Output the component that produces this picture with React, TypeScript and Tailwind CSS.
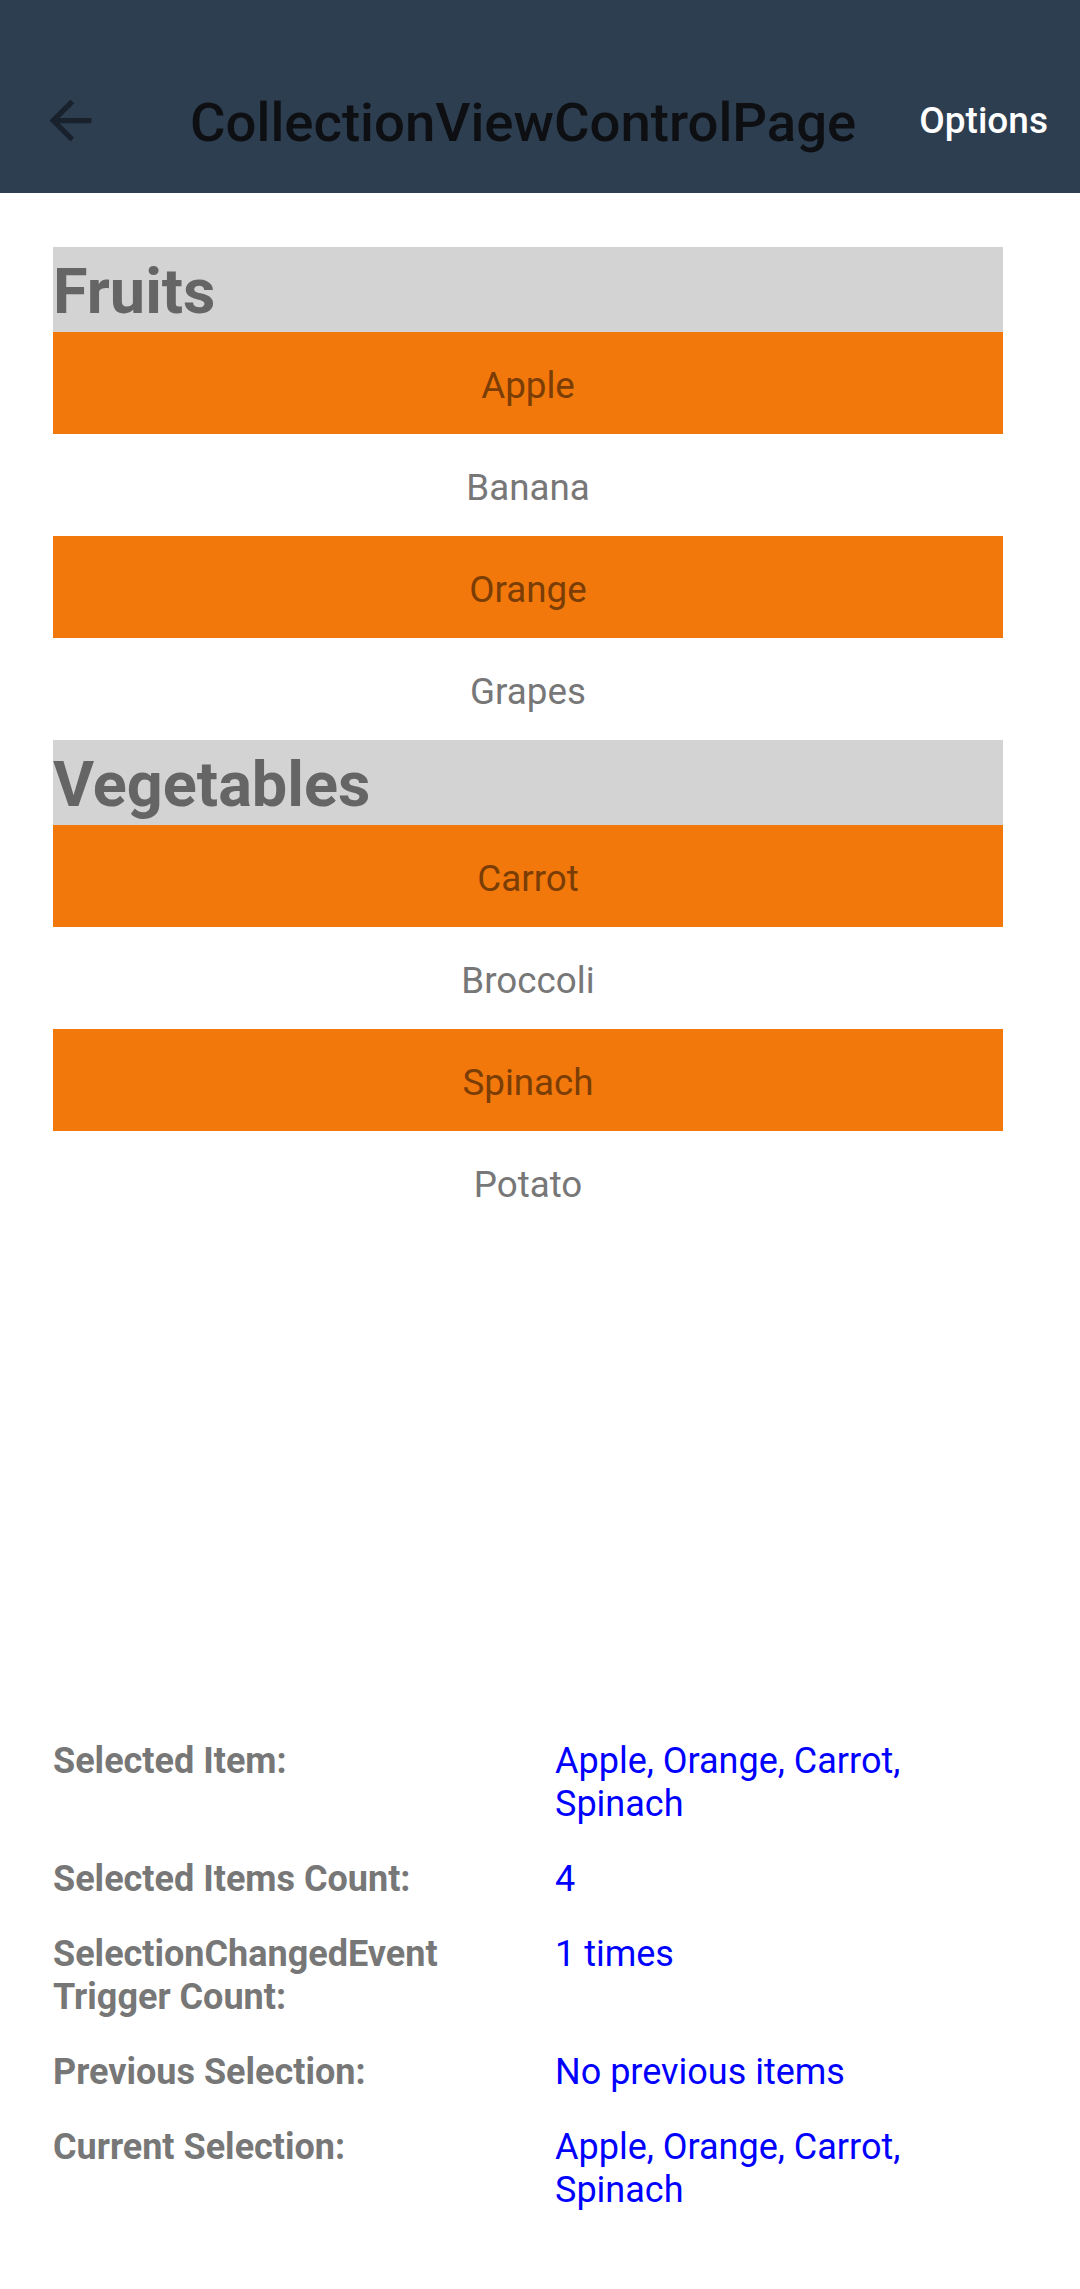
import React from "react";

type Item = { name: string; selected: boolean };
type Group = { title: string; items: Item[] };

const groups: Group[] = [
  {
    title: "Fruits",
    items: [
      { name: "Apple", selected: true },
      { name: "Banana", selected: false },
      { name: "Orange", selected: true },
      { name: "Grapes", selected: false },
    ],
  },
  {
    title: "Vegetables",
    items: [
      { name: "Carrot", selected: true },
      { name: "Broccoli", selected: false },
      { name: "Spinach", selected: true },
      { name: "Potato", selected: false },
    ],
  },
];

const details: { label: string; value: string }[] = [
  { label: "Selected Item:", value: "Apple, Orange, Carrot, Spinach" },
  { label: "Selected Items Count:", value: "4" },
  { label: "SelectionChangedEvent Trigger Count:", value: "1 times" },
  { label: "Previous Selection:", value: "No previous items" },
  { label: "Current Selection:", value: "Apple, Orange, Carrot, Spinach" },
];

export default function App() {
  return (
    <div className="w-[1080px] min-h-[2289px] bg-white font-['Roboto',sans-serif]">
      {/* Toolbar */}
      <header className="h-[193px] bg-[#2d3e50] pt-[47px] flex items-center">
        <button className="ml-[39px] w-[63px] h-[63px] flex items-center justify-center">
          <svg width="63" height="63" viewBox="0 0 24 24" fill="#19212c">
            <path d="M20 11H7.83l5.59-5.59L12 4l-8 8 8 8 1.41-1.41L7.83 13H20v-2z" />
          </svg>
        </button>
        <h1 className="ml-[88px] mt-[4px] text-[54.5px] leading-none font-medium text-[#0d0f12]">
          CollectionViewControlPage
        </h1>
        <span className="ml-auto mr-[32px] mt-[2px] text-[37px] font-medium text-white">
          Options
        </span>
      </header>

      {/* Grouped collection */}
      <div className="pt-[54px] pl-[53px]">
        <div className="w-[950px]">
          {groups.map((group) => (
            <div key={group.title}>
              <div className="h-[85px] bg-[#d3d3d3] pt-[8px]">
                <span className="text-[63px] leading-[74px] font-bold text-[#656565]">
                  {group.title}
                </span>
              </div>
              {group.items.map((item) => (
                <div
                  key={item.name}
                  className={
                    item.selected
                      ? "h-[102px] pt-[5px] bg-[#f2780c] flex items-center justify-center text-[36.75px] text-[#7a3d06]"
                      : "h-[102px] pt-[5px] bg-white flex items-center justify-center text-[36.75px] text-[#777777]"
                  }
                >
                  {item.name}
                </div>
              ))}
            </div>
          ))}
        </div>
      </div>

      {/* Selection details */}
      <div className="mt-[507px] px-[53px] grid grid-cols-2 gap-x-[30px] gap-y-[32px] text-[36px] leading-[43px]">
        {details.map((row) => (
          <React.Fragment key={row.label}>
            <div className="font-bold text-[#777777]">{row.label}</div>
            <div className="text-[#0000ff]">{row.value}</div>
          </React.Fragment>
        ))}
      </div>
    </div>
  );
}
